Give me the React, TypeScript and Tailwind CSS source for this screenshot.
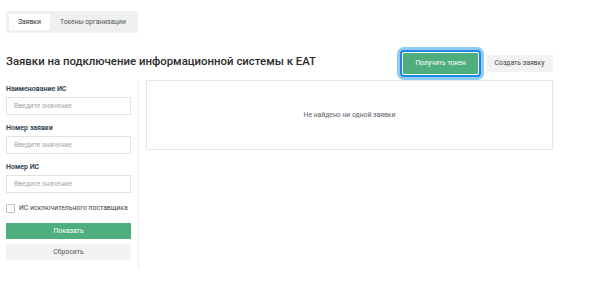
import React from 'react'

const fields = ['Наименование ИС', 'Номер заявки', 'Номер ИС']

export default function App() {
    return (
        <div className="font-['Roboto',sans-serif] w-[553px] pl-[6px] pt-[11px] text-[#333]">
            {/* Tabs */}
            <div className="flex w-fit items-center bg-[#eff0f2] p-[3px] pr-[12px] h-[22px] box-border">
                <div className="bg-white h-[16px] w-[41px] flex items-center justify-center text-[6.8px] text-[#333]">
                    Заявки
                </div>
                <div className="pl-[10px] text-[6.7px] text-[#555]">Токены организации</div>
            </div>

            {/* Header */}
            <div className="flex items-center justify-between mt-[14px] h-[33px]">
                <h1 className="text-[11.4px] font-medium text-[#2b2b2b] leading-none mb-[4px]">
                    Заявки на подключение информационной системы к ЕАТ
                </h1>
                <div className="flex items-center gap-[5px]">
                    <div className="p-[1px] bg-white border-2 border-[#1e88e5] rounded-[4px] shadow-[0_0_0_3px_#8fcbf7]">
                        <button className="block w-[75px] h-[21px] bg-[#4fae7e] rounded-[1px] text-white text-[6.8px]">
                            Получить токен
                        </button>
                    </div>
                    <button className="w-[67px] h-[17px] bg-[#f2f2f3] text-[#444] text-[6.8px]">
                        Создать заявку
                    </button>
                </div>
            </div>

            {/* Body */}
            <div className="flex">
                <div className="w-[133px] pr-[7px] pt-[3px] pb-[9px] border-r border-[#ececec]">
                    {fields.map((f, i) => (
                        <div key={f} className={i > 0 ? 'mt-[7px]' : ''}>
                            <div className="text-[7px] font-semibold leading-[12px] text-[#2d3a4a]">{f}</div>
                            <input
                                placeholder="Введите значение"
                                className="block mt-[2px] w-full h-[18px] border border-[#e3e3e3] px-[7px] text-[6.8px] placeholder:text-[#a3a7ad] outline-none"
                            />
                        </div>
                    ))}
                    <label className="flex items-center gap-[4px] mt-[10px] h-[10px]">
                        <span className="shrink-0 w-[9px] h-[9px] border border-[#bfc3c8] rounded-[1px] bg-white" />
                        <span className="whitespace-nowrap text-[6.8px] text-[#444]">ИС исключительного поставщика</span>
                    </label>
                    <button className="block mt-[10px] w-full h-[16px] bg-[#4fae7e] text-white text-[6.8px]">
                        Показать
                    </button>
                    <button className="block mt-[5px] w-full h-[16px] bg-[#f2f2f3] text-[#555] text-[6.8px]">
                        Сбросить
                    </button>
                </div>
                <div className="flex-1 pl-[7px]">
                    <div className="h-[70px] border border-[#e6e6e6] flex items-center justify-center text-[6.8px] text-[#5a5f66]">
                        Не найдено ни одной заявки
                    </div>
                </div>
            </div>
        </div>
    )
}
